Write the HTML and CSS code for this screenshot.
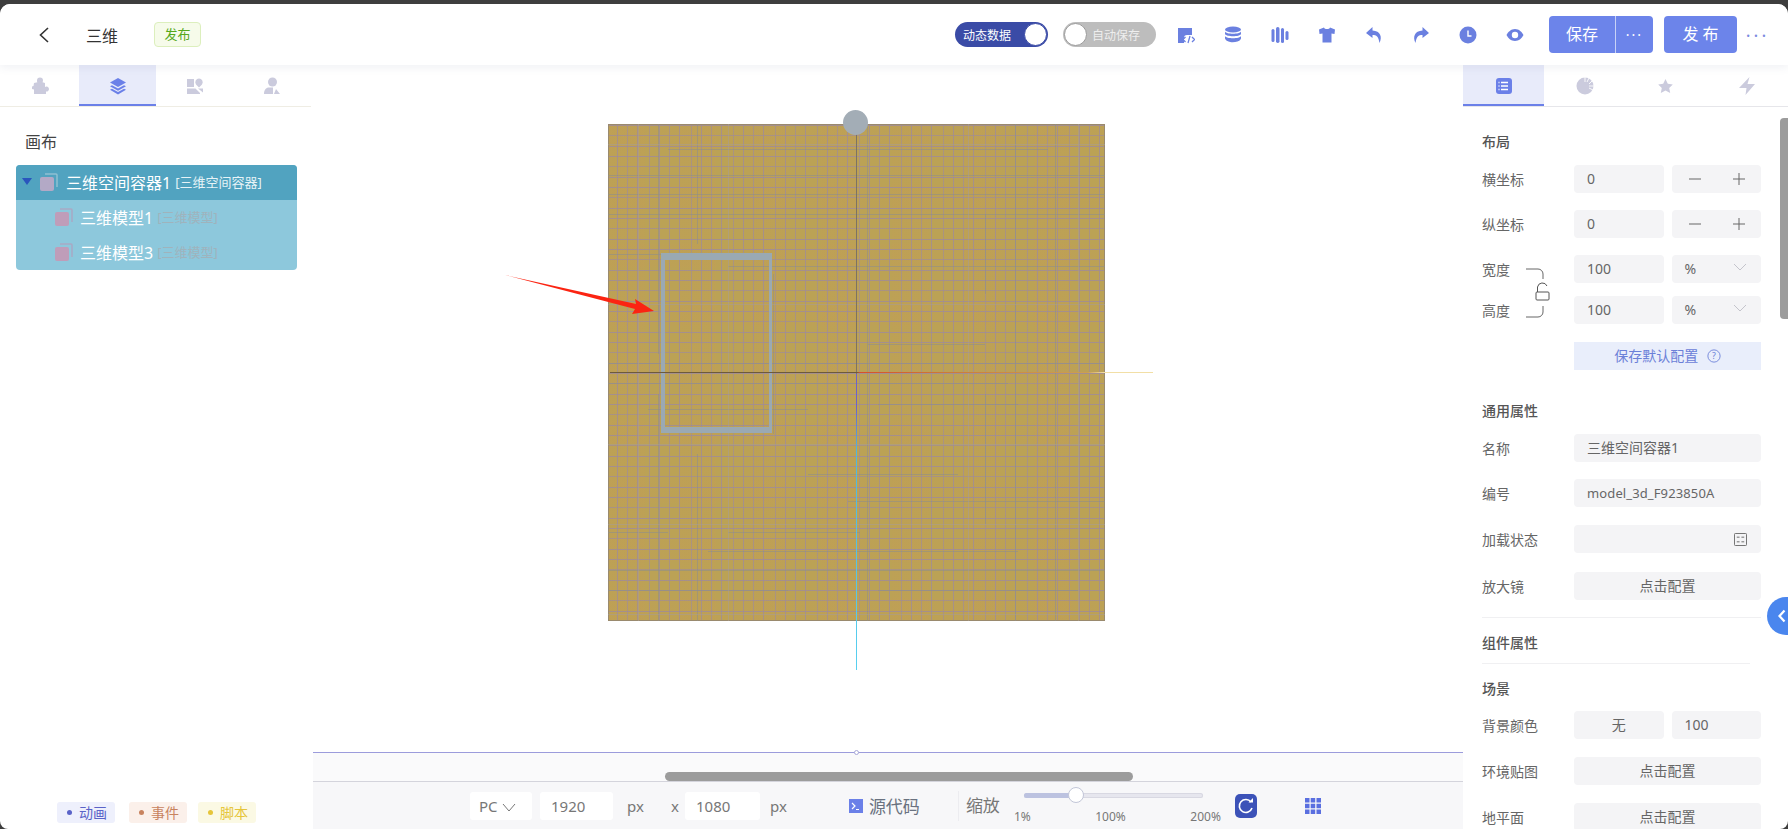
FILE: index.html
```html
<!DOCTYPE html>
<html lang="zh-CN">
<head>
<meta charset="utf-8">
<title>三维</title>
<link rel="stylesheet" href="styles.css">
</head>
<body>
<div class="app">
  <header class="header">
    <svg class="back" viewBox="0 0 14 20" width="14" height="20"><path d="M11 3 3.500 10l7.500 7" fill="none" stroke="#333" stroke-width="1.600"/></svg>
    <span class="title">三维</span>
    <span class="tag-pub">发布</span>
    <div class="header-right">
      <div class="switch on"><span class="switch-text">动态数据</span><i class="knob"></i></div>
      <div class="switch off"><i class="knob"></i><span class="switch-text">自动保存</span></div>
      <div class="tools">
        <svg viewBox="0 0 18 18"><path d="M1 2h14v7H10a3 3 0 0 0-3 3v5H1z"/><path d="M8.500 11 6 13.500 8.500 16M15 11l2.500 2.500L15 16M13 10l-2 7" fill="none" stroke="#6b80e0" stroke-width="1.300"/></svg>
        <svg viewBox="0 0 18 18"><ellipse cx="9" cy="3.500" rx="8" ry="3"/><path d="M1 5.500c1 3 15 3 16 0V8c-1 3-15 3-16 0zM1 10c1 3 15 3 16 0v2.500c-.5 1.500-2 2.500-3.500 3-3 1-7 1-9 0C3 15 1.500 14 1 12.500z"/></svg>
        <svg viewBox="0 0 18 18"><rect x=".5" y="3" width="3" height="13" rx="1.500"/><rect x="5" y="1" width="3.500" height="16" rx="1.700"/><rect x="10" y="2" width="3" height="15" rx="1.500"/><rect x="14.500" y="5" width="3" height="9" rx="1.500"/></svg>
        <svg viewBox="0 0 18 18"><path d="M6 1.500 1 3.500 1.500 8l3-.5V16.500h9V7.500l3 .5.500-4.500-5-2c-.5 2-5.500 2-6 0z"/></svg>
        <svg viewBox="0 0 18 18"><path d="M7.500 1 1 7l6.500 5V9c4 0 6 1.500 7 8 3-6 1-12-7-12.500z"/></svg>
        <svg viewBox="0 0 18 18"><path d="M10.500 1 17 7l-6.500 5V9c-4 0-6 1.500-7 8-3-6-1-12 7-12.500z"/></svg>
        <svg viewBox="0 0 18 18"><circle cx="9" cy="9" r="8.500"/><path d="M9 4.500V10h3.500" fill="none" stroke="#fff" stroke-width="1.400"/></svg>
        <svg viewBox="0 0 18 18"><path fill-rule="evenodd" d="M9 3c4 0 7 3 8.500 6-1.500 3-4.500 6-8.500 6s-7-3-8.500-6C2 6 5 3 9 3zm0 2.800a3.200 3.200 0 1 0 0 6.400 3.200 3.200 0 0 0 0-6.400z"/></svg>
      </div>
      <div class="btn-group">
        <span class="btn-main">保存</span><span class="btn-more">···</span>
      </div>
      <span class="btn-pub">发 布</span>
      <span class="dots">···</span>
    </div>
  </header>

  <main class="main">
    <aside class="left">
      <nav class="tabs tabs-left">
        <span class="tab"><svg viewBox="0 0 18 18"><path d="M8 .500a3 3 0 0 1 3 3c0 .7-.3 1.300-.5 1.800L13 6v4a2.500 2.500 0 0 1 4 2 2.500 2.500 0 0 1-3 2.500V17H2v-4.500L0 12V9.500l1.500-.5L2 6l3.500-.7C5 4.800 5 4 5 3.500a3 3 0 0 1 3-3z"/></svg></span>
        <span class="tab active"><svg viewBox="0 0 18 18"><path d="M9 1l8 4.500-8 4.500-8-4.500z"/><path d="M3 8.200 9 11.500l6-3.300 2 1.100-8 4.500-8-4.500zM3 11.700 9 15l6-3.300 2 1.100-8 4.700-8-4.700z"/></svg></span>
        <span class="tab"><svg viewBox="0 0 18 18"><rect x="1" y="2" width="7" height="8"/><path d="M13 1.500a3.800 3.800 0 0 1 3 6L13 10.500l-3-3a3.800 3.800 0 0 1 3-6z"/><path d="M1 11.500h8.500L14 16v1H1zM12 11.500h5v4z"/></svg></span>
        <span class="tab"><svg viewBox="0 0 18 18"><circle cx="9.500" cy="5" r="4.500"/><path d="M1 17c0-4 2-6.500 5-6.500h4V17zM13 12l4 5h-6z"/></svg></span>
      </nav>
      <h2 class="tree-title">画布</h2>
      <div class="tree">
        <div class="tree-row tree-root">
          <i class="caret"></i>
          <svg class="node-ico" viewBox="0 0 20 20"><rect x="1" y="5" width="14" height="14" rx="2"/><path d="M6 2h11a1 1 0 0 1 1 1v12" fill="none" stroke="#8fc0d2" stroke-width="1.500"/></svg>
          <span class="tree-name">三维空间容器1</span><span class="tree-type">[三维空间容器]</span>
        </div>
        <div class="tree-row tree-child">
          <svg class="node-ico" viewBox="0 0 20 20"><rect x="1" y="5" width="14" height="14" rx="2"/><path d="M6 2h11a1 1 0 0 1 1 1v12" fill="none" stroke="#a9a9c4" stroke-width="1.500"/></svg>
          <span class="tree-name">三维模型1</span><span class="tree-type dim">[三维模型]</span>
        </div>
        <div class="tree-row tree-child">
          <svg class="node-ico" viewBox="0 0 20 20"><rect x="1" y="5" width="14" height="14" rx="2"/><path d="M6 2h11a1 1 0 0 1 1 1v12" fill="none" stroke="#a9a9c4" stroke-width="1.500"/></svg>
          <span class="tree-name">三维模型3</span><span class="tree-type dim">[三维模型]</span>
        </div>
      </div>
      <div class="left-foot">
        <span class="chip chip-a">动画</span>
        <span class="chip chip-b">事件</span>
        <span class="chip chip-c">脚本</span>
      </div>
    </aside>

    <section class="center">
      <div class="stage">
        <div class="wood">
          <svg class="wood-lines" viewBox="0 0 497 497" width="497" height="497">
            <path class="line-grey" d="M50.500 0V230M50.500 270V497M89.500 0V120M89.500 330V497M259.500 0V497M407.500 0V497M447.500 0V497M377.500 90V170M377.500 270V400M165.500 150V310"/>
            <path class="line-grey" d="M0 51.500H497M0 70.500H497M0 90.500H497M0 239.500H497M0 259.500H400M40 285.500H200M260 220.500H377M270 280.500H410M240 377.500H497M120 408.500H252M0 408.500H60M100 427.500H410M0 446.500H497M270 466.500H470M0 466.500H180M60 25.500H440M120 142.500H497M0 130.500H80M200 350.500H350"/>
            <path class="line-pale" d="M360.500 0V497M120.500 0V497M30.500 0V497M470.500 0V497M0 320.500H497M0 180.500H497M0 20.500H497M0 400.500H497M0 490.500H497"/>
          </svg>
          <div class="sel"></div>
          <i class="axis-y"></i>
          <i class="axis-x"></i>
          <i class="gizmo"></i>
          <svg class="arrow" viewBox="0 0 160 50" width="160" height="50"><path d="M6 2 137 31l-1-5 19 12-22 3 3-5z" fill="#fb2412"/></svg>
        </div>
      </div>
      <div class="ruler"><i class="ruler-dot"></i></div>
      <div class="hscroll"><i class="hthumb"></i></div>
      <div class="toolbar">
        <span class="box box-pc">PC <svg class="pc-caret" viewBox="0 0 14 9" width="14" height="9"><path d="M1 1l6 7 6-7" fill="none" stroke="#777" stroke-width="1"/></svg></span>
        <span class="box box-num">1920</span>
        <span class="unit unit-a">px</span>
        <span class="unit unit-x">x</span>
        <span class="box box-num2">1080</span>
        <span class="unit unit-b">px</span>
        <span class="code"><svg viewBox="0 0 14 14" width="14" height="14"><rect width="14" height="14" fill="#6b80e8"/><path d="M3 4l3 3-3 3M7 10.500h3" fill="none" stroke="#fff" stroke-width="1.200"/></svg>源代码</span>
        <span class="zoom-label">缩放</span>
        <div class="slider">
          <div class="track"><i class="track-fill"></i><i class="track-knob"></i></div>
          <div class="ticks"><span>1%</span><span>100%</span><span>200%</span></div>
        </div>
        <svg class="refresh" viewBox="0 0 22 24" width="22" height="24"><rect width="22" height="24" rx="5" fill="#3c52b8"/><path d="M16 8a6.500 6.500 0 1 0 1 6" fill="none" stroke="#fff" stroke-width="1.600"/><path d="M13.500 8.500h4.500V4z" fill="#fff"/></svg>
        <svg class="grid-ico" viewBox="0 0 16 16" width="16" height="16"><path fill="#5a6fe0" d="M0 0h4.500v4.500H0zM5.700 0h4.500v4.500H5.700zM11.500 0H16v4.500h-4.500zM0 5.700h4.500v4.500H0zM5.700 5.700h4.500v4.500H5.700zM11.500 5.700H16v4.500h-4.500zM0 11.500h4.500V16H0zM5.700 11.500h4.500V16H5.700zM11.500 11.500H16V16h-4.500z"/></svg>
      </div>
    </section>

    <aside class="right">
      <nav class="tabs tabs-right">
        <span class="tab active"><svg viewBox="0 0 18 18"><rect x="1" y="1" width="16" height="16" rx="3"/><path d="M6 5.500h7M6 9h7M6 12.500h7" stroke="#fff" stroke-width="1.300"/><path d="M3.500 5.500h1M3.500 9h1M3.500 12.500h1" stroke="#fff" stroke-width="1.300"/></svg></span>
        <span class="tab"><svg viewBox="0 0 18 18"><circle cx="9" cy="9" r="8.500"/><path d="M9 0v5M13 1l-2 4M16 4l-3 3M18 9h-5M17 13l-4-2" stroke="#fff" stroke-width=".9"/></svg></span>
        <span class="tab"><svg viewBox="0 0 18 18"><path d="M8.500 2l2.300 4.800 5 .6-3.600 3.500 1 5.100-4.700-2.500L3.800 16l1-5.100L1.200 7.400l5-.6z"/></svg></span>
        <span class="tab"><svg viewBox="0 0 18 18"><path d="M11.500 0 9.500 7H17L7.500 18 8.500 11H1z"/></svg></span>
      </nav>
      <div class="props">
        <h3 class="sec sec-first">布局</h3>
        <div class="row"><label>横坐标</label><span class="field half">0</span><span class="field half step"><svg viewBox="0 0 12 12" width="12" height="12"><path d="M0 6h12" stroke="#666"/></svg><svg viewBox="0 0 12 12" width="12" height="12"><path d="M0 6h12M6 0v12" stroke="#666"/></svg></span></div>
        <div class="row"><label>纵坐标</label><span class="field half">0</span><span class="field half step"><svg viewBox="0 0 12 12" width="12" height="12"><path d="M0 6h12" stroke="#666"/></svg><svg viewBox="0 0 12 12" width="12" height="12"><path d="M0 6h12M6 0v12" stroke="#666"/></svg></span></div>
        <div class="size-group">
          <div class="row row-tight"><label>宽度</label><span class="field half">100</span><span class="field half sel-f">%<svg viewBox="0 0 14 8" width="14" height="8"><path d="M1 1l6 6 6-6" fill="none" stroke="#c4c4cc"/></svg></span></div>
          <div class="row"><label>高度</label><span class="field half">100</span><span class="field half sel-f">%<svg viewBox="0 0 14 8" width="14" height="8"><path d="M1 1l6 6 6-6" fill="none" stroke="#c4c4cc"/></svg></span></div>
          <svg class="lock" viewBox="0 0 26 52" width="26" height="52"><path d="M1 1h12a5 5 0 0 1 5 5v5M18 38v6a5 5 0 0 1-5 5H1" fill="none" stroke="#666" stroke-width="1"/><path d="M12.500 24v-5a5 5 0 0 1 9.500-1" fill="none" stroke="#555"/><rect x="11" y="24" width="13" height="8" rx="1" fill="#fff" stroke="#555"/></svg>
        </div>
        <div class="row row-end"><span class="save-default">保存默认配置 <svg viewBox="0 0 16 16" width="14" height="14"><circle cx="8" cy="8" r="7" fill="none" stroke="#6b80d8"/><text x="8" y="11.500" text-anchor="middle" class="qm">?</text></svg></span></div>
        <h3 class="sec">通用属性</h3>
        <div class="row"><label>名称</label><span class="field full">三维空间容器1</span></div>
        <div class="row row-wide"><label>编号</label><span class="field full field-id">model_3d_F923850A</span></div>
        <div class="row row-wide2"><label>加载状态</label><span class="field full calc"><svg viewBox="0 0 14 14" width="13" height="13"><rect x=".5" y=".5" width="13" height="13" rx="1" fill="none" stroke="#666"/><path d="M3 4.500h3M8 4.500h3M3 9.500h3M8 9.500h3" stroke="#666"/></svg></span></div>
        <div class="row row-last"><label>放大镜</label><span class="field full center-text">点击配置</span></div>
        <div class="divider"></div>
        <h3 class="sec sec-comp">组件属性</h3>
        <div class="divider divider-short"></div>
        <h3 class="sec sec-scene">场景</h3>
        <div class="row row-wide"><label>背景颜色</label><span class="field half center-text">无</span><span class="field half">100</span></div>
        <div class="row row-wide"><label>环境贴图</label><span class="field full center-text">点击配置</span></div>
        <div class="row"><label>地平面</label><span class="field full center-text">点击配置</span></div>
      </div>
      <i class="vthumb"></i>
      <span class="collapse"><svg viewBox="0 0 8 14" width="8" height="14"><path d="M6.500 1.500 1.500 7l5 5.500" fill="none" stroke="#fff" stroke-width="2.200"/></svg></span>
    </aside>
  </main>
</div>
</body>
</html>
```

FILE: styles.css
```css
* { box-sizing: border-box; }
html, body { margin: 0; height: 100%; overflow: hidden; }
body {
  background: #3e3e3e;
  padding-top: 4px;
  font-family: "Noto Sans", "Noto Sans CJK SC", sans-serif;
  color: #555;
  font-size: 14px;
}
.app {
  height: 825px;
  background: #fff;
  border-radius: 10px 10px 8px 8px;
  overflow: hidden;
  display: flex;
  flex-direction: column;
}

/* header */
.header {
  height: 61px;
  flex: none;
  display: flex;
  align-items: center;
  padding: 0 10px 0 37px;
  background: #fff;
  box-shadow: 0 3px 8px rgba(80, 90, 130, .08);
  position: relative;
  z-index: 2;
}
.back { flex: none; }
.title { margin-left: 35px; font-size: 16px; color: #333; width: 34px; white-space: nowrap; }
.tag-pub {
  margin-left: 34px;
  width: 47px;
  height: 25px;
  line-height: 22px;
  text-align: center;
  font-size: 13px;
  color: #55a81c;
  background: #f6fbea;
  border: 1px solid #dcefbd;
  border-radius: 4px;
}
.header-right { margin-left: auto; display: flex; align-items: center; }
.switch {
  width: 93px;
  height: 25px;
  border-radius: 13px;
  display: flex;
  align-items: center;
  font-size: 12px;
  color: #fff;
  white-space: nowrap;
}
.switch.on { background: #3a4ba6; justify-content: space-between; padding-left: 8px; }
.switch.off { background: #bdbdbd; margin-left: 15px; gap: 4px; color: #eee; }
.switch.on .knob { border-color: #3a4ba6; }
.knob {
  flex: none;
  width: 23px;
  height: 23px;
  margin: 0 1px;
  border-radius: 50%;
  background: #fff;
  border: 1px solid #9a9a9a;
}
.tools { display: flex; margin-left: 21px; gap: 29px; }
.tools svg { width: 18px; height: 18px; fill: #6b80e0; display: block; }
.btn-group {
  margin-left: 25px;
  width: 104px;
  height: 37px;
  display: flex;
  background: #6c84ea;
  border-radius: 4px;
  color: #fff;
  line-height: 37px;
  text-align: center;
}
.btn-main { width: 67px; font-size: 16px; border-right: 1px solid #c8d2f6; }
.btn-more { flex: 1; font-size: 14px; letter-spacing: 2px; }
.btn-pub {
  margin-left: 11px;
  width: 73px;
  height: 37px;
  line-height: 36px;
  text-align: center;
  background: #6c84ea;
  border-radius: 4px;
  color: #fff;
  font-size: 16px;
}
.dots { width: 41px; text-align: center; color: #7b8ae0; font-size: 18px; letter-spacing: 3px; }

/* body columns */
.main { flex: 1; min-height: 0; display: flex; }
.left { width: 313px; flex: none; display: flex; flex-direction: column; }
.center { flex: 1; min-width: 0; display: flex; flex-direction: column; }
.right { width: 325px; flex: none; position: relative; overflow: hidden; }

/* tabs */
.tabs { height: 42px; display: flex; border-bottom: 1px solid #efede4; }
.tabs-left { padding-left: 2px; margin-right: 2px; }
.tab {
  width: 77px;
  display: flex;
  align-items: center;
  justify-content: center;
}
.tab svg { width: 18px; height: 18px; fill: #cbcbdd; }
.tab.active { background: #e8ebfa; box-shadow: inset 0 -2px 0 #6b80e8; }
.tab.active svg { fill: #6b80e8; }
.tabs-right { border-bottom-color: #e6e6ea; }
.tabs-right .tab { width: 81.500px; }

/* tree */
.tree-title { margin: 24px 0 12px 25px; font-size: 16px; font-weight: 400; color: #444; line-height: 22px; }
.tree {
  margin: 0 16px;
  border-radius: 4px;
  overflow: hidden;
  background: #8dc8dc;
}
.tree-row { height: 35px; padding-bottom: 2px; display: flex; align-items: center; color: #fff; white-space: nowrap; font-size: 16px; }
.tree-root { background: #51a3c0; padding-left: 6px; }
.tree-child { padding-left: 38px; }
.caret {
  width: 0; height: 0;
  border-left: 5.500px solid transparent;
  border-right: 5.500px solid transparent;
  border-top: 7px solid #2a55bd;
  margin-right: 7px;
}
.node-ico { width: 20px; height: 20px; fill: #b3a9c6; margin-right: 7px; flex: none; }
.tree-child .node-ico { fill: #bf9db9; margin-right: 6px; }
.tree-type { margin-left: 4px; font-size: 13px; color: #e6f3f7; }
.tree-type.dim { color: #9fb3bc; }
.left-foot { margin-top: auto; display: flex; padding: 0 0 6px 57px; gap: 14px; }
.chip {
  height: 21px;
  line-height: 21px;
  font-size: 14px;
  padding: 0 8px 0 22px;
  border-radius: 3px;
  position: relative;
}
.chip::before {
  content: "";
  position: absolute;
  left: 10px;
  top: 8px;
  width: 5px;
  height: 5px;
  border-radius: 50%;
  background: currentColor;
}
.chip-a { background: #eef0fc; color: #5a63c8; }
.chip-b { background: #fbf0ea; color: #c8835f; }
.chip-c { background: #fbf9e4; color: #e6c53a; margin-left: -3px; }

/* stage */
.stage { flex: 1; min-height: 0; padding: 59px 0 0 295px; background: #fff; }
.wood {
  width: 497px;
  height: 497px;
  position: relative;
  background-color: #bba255;
  background-image:
    repeating-linear-gradient(90deg, transparent 0 9px, rgba(160, 140, 150, .8) 9px 10px, transparent 10px 19px, rgba(160, 140, 150, .7) 19px 20px, transparent 20px 29px, rgba(160, 140, 150, .8) 29px 30px, transparent 30px 41px, rgba(160, 140, 150, .65) 41px 42px),
    repeating-linear-gradient(0deg, transparent 0 9px, rgba(160, 140, 150, .85) 9px 10px, transparent 10px 20px, rgba(160, 140, 150, .7) 20px 21px, transparent 21px 30px, rgba(160, 140, 150, .85) 30px 31px),
    repeating-linear-gradient(90deg, rgba(205, 150, 85, .1) 0 37px, transparent 37px 71px),
    repeating-linear-gradient(0deg, rgba(205, 150, 85, .08) 0 23px, transparent 23px 59px);
  box-shadow: inset 0 0 0 1px #9a8a6e;
}
.wood-lines { position: absolute; left: 0; top: 0; fill: none; }
.line-grey { stroke: #8f8f88; stroke-opacity: .6; stroke-width: 1; }
.line-pale { stroke: #a89c90; stroke-opacity: .6; stroke-width: 1; }
.sel {
  position: absolute;
  left: 53px;
  top: 129px;
  width: 111px;
  height: 180px;
  border: solid #9aa9b3;
  border-width: 7px 3px 6px 4px;
}
.axis-y {
  position: absolute;
  left: 248px;
  top: -2px;
  width: 1px;
  height: 548px;
  background: linear-gradient(#7b7365 0 46%, #6c63c8 46% 52%, #4fb6e0 60%, #58d0f0 100%);
}
.axis-x {
  position: absolute;
  left: 2px;
  top: 248px;
  width: 543px;
  height: 1px;
  background: linear-gradient(90deg, #6d5a3c 0 45.500%, #d8502a 46%, #cc7a3a 62%, #cca050 88%, #f2dfa6 91%, #f2dfa6 100%);
}
.gizmo {
  position: absolute;
  left: 235px;
  top: -14px;
  width: 25px;
  height: 25px;
  border-radius: 50%;
  background: #a3adb6;
}
.arrow { position: absolute; left: -109px; top: 149px; }

/* under stage */
.ruler { height: 1px; flex: none; background: #9c9cdc; position: relative; }
.ruler-dot {
  position: absolute;
  left: 541px;
  top: -2px;
  width: 5px;
  height: 5px;
  border-radius: 50%;
  background: #fff;
  border: 1px solid #a9a9d9;
}
.hscroll { height: 29px; flex: none; background: #fafafb; padding: 19px 0 0 352px; border-bottom: 1px solid #d4d4dc; }
.hthumb { display: block; width: 468px; height: 9px; border-radius: 5px; background: #9c9c9c; }
.toolbar {
  height: 47px;
  flex: none;
  background: #f7f7f9;
  display: flex;
  align-items: center;
  padding-left: 157px;
  font-size: 15px;
  color: #777;
  white-space: nowrap;
}
.box { height: 28px; line-height: 28px; background: #fff; border-radius: 3px; padding-left: 9px; }
.box-pc { width: 62px; }
.pc-caret { margin-left: 1px; }
.box-num { width: 73px; margin-left: 8px; padding-left: 11px; }
.box-num2 { width: 75px; padding-left: 11px; }
.unit-a { margin-left: 14px; width: 44px; }
.unit-x { width: 14px; }
.unit-b { margin-left: 10px; }
.code { margin-left: 62px; display: flex; align-items: center; gap: 6px; font-size: 17px; color: #6a7280; }
.zoom-label { margin-left: 38px; font-size: 17px; border-left: 1px solid #ececf0; padding-left: 7px; height: 30px; line-height: 30px; }
.slider { margin-left: 14px; margin-top: 6px; width: 207px; font-size: 12px; }
.track { position: relative; margin: 0 18px 0 10px; height: 5px; border-radius: 3px; background: #e6e6ee; box-shadow: inset 0 0 0 1px #d8d8e2; }
.track-fill { position: absolute; left: 0; top: 0; height: 5px; width: 52px; border-radius: 3px; background: #bcc2e0; }
.track-knob {
  position: absolute;
  left: 44px;
  top: -6px;
  width: 16px;
  height: 16px;
  border-radius: 50%;
  background: #fff;
  border: 1px solid #c2c6d8;
}
.ticks { display: flex; justify-content: space-between; margin-top: 12px; line-height: 14px; }
.refresh { margin-left: 14px; flex: none; }
.grid-ico { margin-left: 48px; flex: none; }

/* right panel */
.props { padding: 0 27px 0 19px; }
.sec { margin: 0; font-size: 14px; font-weight: 500; color: #555; line-height: 20px; }
.sec-first { margin-top: 25px; margin-bottom: 13px; }
.row { display: flex; height: 28px; margin-bottom: 17px; align-items: center; gap: 8px; }
.row label { width: 84px; flex: none; font-size: 14px; color: #666; }
.row-tight { margin-bottom: 13px; }
.row-end { padding-left: 92px; margin-top: 18px; margin-bottom: 31px; }
.field {
  height: 28px;
  line-height: 28px;
  background: #f4f4f6;
  border-radius: 4px;
  font-size: 14px;
  color: #666;
  padding-left: 13px;
  white-space: nowrap;
}
.field-id { font-size: 13px; letter-spacing: .12px; }
.half { flex: none; width: 89.500px; }
.full { flex: 1; }
.step { display: flex; align-items: center; justify-content: space-between; padding: 0 16px 0 17px; }
.sel-f { display: flex; align-items: center; justify-content: space-between; padding: 0 14px 0 13px; }
.sel-f svg { margin-top: -5px; }
.size-group { position: relative; }
.size-group .row:last-of-type { margin-bottom: 0; }
.lock { position: absolute; left: 43px; top: 13px; }
.save-default {
  flex: 1;
  height: 28px;
  line-height: 28px;
  text-align: center;
  background: #e9eefb;
  font-size: 14px;
  color: #6b80d8;
}
.save-default svg { vertical-align: -2px; margin-left: 5px; }
.qm { font-size: 10px; fill: #6b80d8; }
.sec + .row { margin-top: 13px; }
.calc { display: flex; align-items: center; justify-content: flex-end; padding-right: 14px; }
.center-text { text-align: center; padding-left: 0; }
.row-wide { margin-bottom: 18px; }
.row-wide2 { margin-bottom: 19px; }
.row-last { margin-bottom: 17px; }
.divider { height: 1px; background: #f0f0f2; }
.divider-short { margin-right: 11px; }
.sec-comp { margin: 15px 0 10px; }
.sec-scene { margin: 15px 0 12px; }
.sec-scene + .row { margin-top: 0; }
.vthumb {
  position: absolute;
  right: 0;
  top: 53px;
  width: 8px;
  height: 201px;
  border-radius: 4px 0 0 4px;
  background: #9c9c9c;
}
.collapse {
  position: absolute;
  right: 0;
  top: 532px;
  width: 21px;
  height: 38px;
  border-radius: 19px 0 0 19px;
  background: #4a86ee;
  display: flex;
  align-items: center;
  justify-content: flex-end;
  padding-right: 2px;
}
```
